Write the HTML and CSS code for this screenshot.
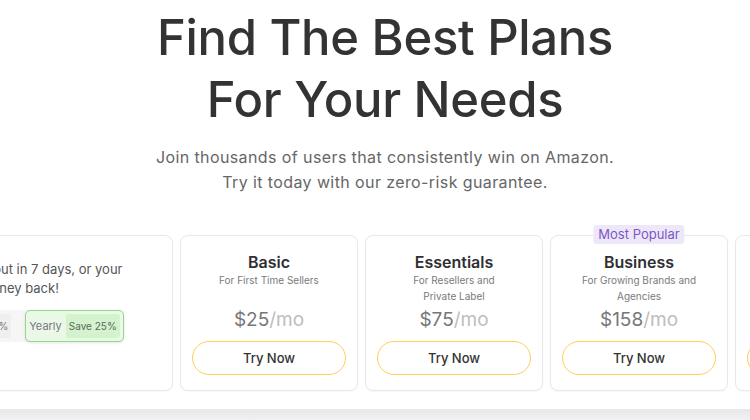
FILE: index.html
```html
<!DOCTYPE html>
<html lang="en">
<head>
<meta charset="utf-8">
<title>Pricing</title>
<link rel="stylesheet" href="styles.css">
</head>
<body>
<main class="page">
  <header class="hero">
    <h1 class="hero-title">Find The Best Plans<br>For Your Needs</h1>
    <p class="hero-sub">Join thousands of users that consistently win on Amazon.<br>Try it today with our zero-risk guarantee.</p>
  </header>
  <section class="plans">
    <div class="card intro">
      <p class="intro-text">No risk. Opt out in 7 days, or your<br>money back!</p>
      <div class="toggle">
        <div class="seg">Monthly <span class="chip grey">Save 15%</span></div>
        <div class="seg active">Yearly <span class="chip green">Save 25%</span></div>
      </div>
    </div>
    <div class="card plan">
      <h2 class="plan-name">Basic</h2>
      <p class="plan-desc">For First Time Sellers</p>
      <p class="plan-price">$25<span class="per">/mo</span></p>
      <button class="try">Try Now</button>
    </div>
    <div class="card plan">
      <h2 class="plan-name">Essentials</h2>
      <p class="plan-desc">For Resellers and<br>Private Label</p>
      <p class="plan-price">$75<span class="per">/mo</span></p>
      <button class="try">Try Now</button>
    </div>
    <div class="card plan popular">
      <span class="badge">Most Popular</span>
      <h2 class="plan-name">Business</h2>
      <p class="plan-desc">For Growing Brands and<br>Agencies</p>
      <p class="plan-price">$158<span class="per">/mo</span></p>
      <button class="try">Try Now</button>
    </div>
    <div class="card plan">
      <h2 class="plan-name">Enterprise</h2>
      <p class="plan-desc">For Large Teams</p>
      <p class="plan-price">$399<span class="per">/mo</span></p>
      <button class="try">Try Now</button>
    </div>
  </section>
  <div class="footer-band"></div>
</main>
</body>
</html>
```

FILE: styles.css
```css
* { box-sizing: border-box; }
html, body { margin: 0; padding: 0; background: #fff; }
body {
  font-family: Inter, "Open Sans", "Liberation Sans", sans-serif;
  color: #333;
  width: 750px;
  height: 420px;
  overflow: hidden;
}
.page { display: flex; flex-direction: column; height: 420px; overflow: hidden; }
.hero { text-align: center; padding: 7px 0 0 20px; }
.hero-title {
  margin: 0;
  font-size: 49px;
  font-weight: 500;
  line-height: 62px;
  color: #333;
  letter-spacing: -0.3px;
}
.hero-sub {
  margin: 14px 0 0;
  font-size: 16px;
  letter-spacing: 0.4px;
  line-height: 25px;
  color: #666;
}
.plans {
  display: flex;
  gap: 7px;
  margin-top: 40px;
  margin-left: -134px;
}
.card {
  position: relative;
  flex: 0 0 178px;
  min-width: 0;
  height: 156px;
  border: 1px solid #e9e9ea;
  border-radius: 8px;
  background: #fff;
  box-shadow: 0 1px 2px rgba(0,0,0,0.04);
}
.plan {
  display: flex;
  flex-direction: column;
  align-items: center;
  padding: 16px 12px 15px;
  text-align: center;
}
.plan-name {
  margin: 0;
  font-size: 16px;
  font-weight: 600;
  line-height: 20px;
  color: #2f2f33;
}
.plan-desc {
  margin: 0;
  font-size: 10px;
  line-height: 16px;
  color: #7a7a7a;
  min-height: 32px;
}
.plan-price {
  margin: 4px 0 0;
  font-size: 19px;
  line-height: 24px;
  color: #777;
}
.per { color: #bdbdbd; }
.try {
  margin-top: auto;
  width: 154px;
  height: 34px;
  border: 1.5px solid #fdcf57;
  border-radius: 17px;
  background: #fff;
  font-family: inherit;
  font-size: 13px;
  font-weight: 500;
  color: #333;
}
.badge {
  position: absolute;
  top: -11px;
  left: 50%;
  transform: translateX(-50%);
  background: #ede7f8;
  color: #7b58c8;
  font-size: 13px;
  line-height: 19px;
  padding: 0 5px;
  border-radius: 4px;
  white-space: nowrap;
}
.intro {
  flex-basis: 307px;
  padding-top: 24px;
  display: flex;
  flex-direction: column;
  align-items: center;
  text-align: center;
}
.intro-text {
  margin: 0;
  font-size: 13px;
  line-height: 19px;
  color: #555;
  white-space: nowrap;
}
.toggle {
  margin: 12px 6px 0 0;
  display: flex;
  align-items: center;
  gap: 10px;
  background: #f6f6f6;
  border-radius: 6px;
}
.seg {
  display: flex;
  align-items: center;
  gap: 4px;
  font-size: 11px;
  color: #7a7286;
  height: 32px;
  padding: 0 4px;
  white-space: nowrap;
}
.seg.active {
  background: #eaf9e7;
  border: 1.5px solid #92d98b;
  border-radius: 5px;
  box-shadow: 0 1px 3px rgba(0,0,0,0.1);
  padding: 0 3px 0 3px;
}
.chip {
  border-radius: 3px;
  padding: 6px 3px;
  font-size: 10px;
  color: #5b6a5a;
}
.chip.grey { background: #efefef; color: #777; }
.chip.green { background: #d3f2cd; }
.footer-band {
  margin-top: auto;
  height: 11px;
  background: linear-gradient(#e7e7e9, #f1f1f3);
}
```
